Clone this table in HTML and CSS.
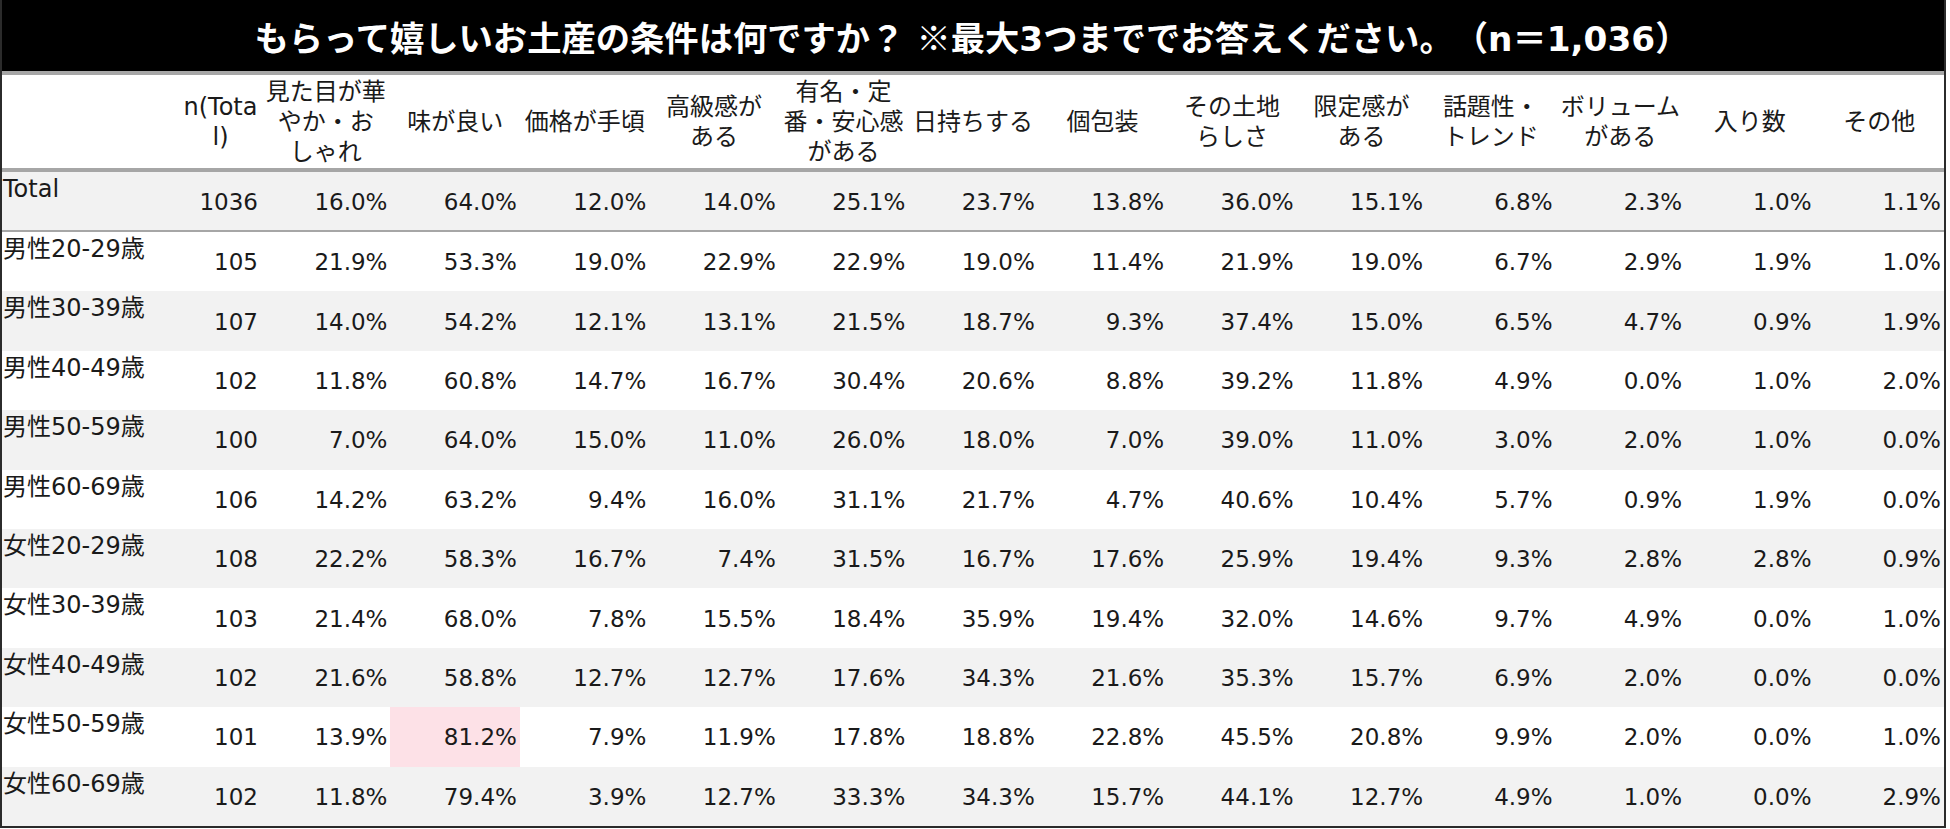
FILE: index.html
```html
<!DOCTYPE html>
<html lang="ja">
<head>
<meta charset="utf-8">
<title>もらって嬉しいお土産の条件</title>
<link rel="stylesheet" href="styles.css">
</head>
<body>
<div class="sheet">
  <div class="title">もらって嬉しいお土産の条件は何ですか？ <span class="cjk">※</span>最大3つまででお答えください。（n＝1,036）</div>
  <div class="row head">
    <div class="hc"></div>
    <div class="hc">n(Tota<br>l)</div>
    <div class="hc">見た目が華<br>やか・お<br>しゃれ</div>
    <div class="hc">味が良い</div>
    <div class="hc">価格が手頃</div>
    <div class="hc">高級感が<br>ある</div>
    <div class="hc">有名・定<br>番・安心感<br>がある</div>
    <div class="hc">日持ちする</div>
    <div class="hc">個包装</div>
    <div class="hc">その土地<br>らしさ</div>
    <div class="hc">限定感が<br>ある</div>
    <div class="hc">話題性・<br>トレンド</div>
    <div class="hc">ボリューム<br>がある</div>
    <div class="hc">入り数</div>
    <div class="hc">その他</div>
  </div>
  <div class="row total alt">
    <div class="lb">Total</div><div class="nm">1036</div><div class="nm">16.0%</div><div class="nm">64.0%</div><div class="nm">12.0%</div><div class="nm">14.0%</div><div class="nm">25.1%</div><div class="nm">23.7%</div><div class="nm">13.8%</div><div class="nm">36.0%</div><div class="nm">15.1%</div><div class="nm">6.8%</div><div class="nm">2.3%</div><div class="nm">1.0%</div><div class="nm">1.1%</div>
  </div>
  <div class="row">
    <div class="lb">男性20-29歳</div><div class="nm">105</div><div class="nm">21.9%</div><div class="nm">53.3%</div><div class="nm">19.0%</div><div class="nm">22.9%</div><div class="nm">22.9%</div><div class="nm">19.0%</div><div class="nm">11.4%</div><div class="nm">21.9%</div><div class="nm">19.0%</div><div class="nm">6.7%</div><div class="nm">2.9%</div><div class="nm">1.9%</div><div class="nm">1.0%</div>
  </div>
  <div class="row alt">
    <div class="lb">男性30-39歳</div><div class="nm">107</div><div class="nm">14.0%</div><div class="nm">54.2%</div><div class="nm">12.1%</div><div class="nm">13.1%</div><div class="nm">21.5%</div><div class="nm">18.7%</div><div class="nm">9.3%</div><div class="nm">37.4%</div><div class="nm">15.0%</div><div class="nm">6.5%</div><div class="nm">4.7%</div><div class="nm">0.9%</div><div class="nm">1.9%</div>
  </div>
  <div class="row">
    <div class="lb">男性40-49歳</div><div class="nm">102</div><div class="nm">11.8%</div><div class="nm">60.8%</div><div class="nm">14.7%</div><div class="nm">16.7%</div><div class="nm">30.4%</div><div class="nm">20.6%</div><div class="nm">8.8%</div><div class="nm">39.2%</div><div class="nm">11.8%</div><div class="nm">4.9%</div><div class="nm">0.0%</div><div class="nm">1.0%</div><div class="nm">2.0%</div>
  </div>
  <div class="row alt">
    <div class="lb">男性50-59歳</div><div class="nm">100</div><div class="nm">7.0%</div><div class="nm">64.0%</div><div class="nm">15.0%</div><div class="nm">11.0%</div><div class="nm">26.0%</div><div class="nm">18.0%</div><div class="nm">7.0%</div><div class="nm">39.0%</div><div class="nm">11.0%</div><div class="nm">3.0%</div><div class="nm">2.0%</div><div class="nm">1.0%</div><div class="nm">0.0%</div>
  </div>
  <div class="row">
    <div class="lb">男性60-69歳</div><div class="nm">106</div><div class="nm">14.2%</div><div class="nm">63.2%</div><div class="nm">9.4%</div><div class="nm">16.0%</div><div class="nm">31.1%</div><div class="nm">21.7%</div><div class="nm">4.7%</div><div class="nm">40.6%</div><div class="nm">10.4%</div><div class="nm">5.7%</div><div class="nm">0.9%</div><div class="nm">1.9%</div><div class="nm">0.0%</div>
  </div>
  <div class="row alt">
    <div class="lb">女性20-29歳</div><div class="nm">108</div><div class="nm">22.2%</div><div class="nm">58.3%</div><div class="nm">16.7%</div><div class="nm">7.4%</div><div class="nm">31.5%</div><div class="nm">16.7%</div><div class="nm">17.6%</div><div class="nm">25.9%</div><div class="nm">19.4%</div><div class="nm">9.3%</div><div class="nm">2.8%</div><div class="nm">2.8%</div><div class="nm">0.9%</div>
  </div>
  <div class="row">
    <div class="lb">女性30-39歳</div><div class="nm">103</div><div class="nm">21.4%</div><div class="nm">68.0%</div><div class="nm">7.8%</div><div class="nm">15.5%</div><div class="nm">18.4%</div><div class="nm">35.9%</div><div class="nm">19.4%</div><div class="nm">32.0%</div><div class="nm">14.6%</div><div class="nm">9.7%</div><div class="nm">4.9%</div><div class="nm">0.0%</div><div class="nm">1.0%</div>
  </div>
  <div class="row alt">
    <div class="lb">女性40-49歳</div><div class="nm">102</div><div class="nm">21.6%</div><div class="nm">58.8%</div><div class="nm">12.7%</div><div class="nm">12.7%</div><div class="nm">17.6%</div><div class="nm">34.3%</div><div class="nm">21.6%</div><div class="nm">35.3%</div><div class="nm">15.7%</div><div class="nm">6.9%</div><div class="nm">2.0%</div><div class="nm">0.0%</div><div class="nm">0.0%</div>
  </div>
  <div class="row">
    <div class="lb">女性50-59歳</div><div class="nm">101</div><div class="nm">13.9%</div><div class="nm hi">81.2%</div><div class="nm">7.9%</div><div class="nm">11.9%</div><div class="nm">17.8%</div><div class="nm">18.8%</div><div class="nm">22.8%</div><div class="nm">45.5%</div><div class="nm">20.8%</div><div class="nm">9.9%</div><div class="nm">2.0%</div><div class="nm">0.0%</div><div class="nm">1.0%</div>
  </div>
  <div class="row alt">
    <div class="lb">女性60-69歳</div><div class="nm">102</div><div class="nm">11.8%</div><div class="nm">79.4%</div><div class="nm">3.9%</div><div class="nm">12.7%</div><div class="nm">33.3%</div><div class="nm">34.3%</div><div class="nm">15.7%</div><div class="nm">44.1%</div><div class="nm">12.7%</div><div class="nm">4.9%</div><div class="nm">1.0%</div><div class="nm">0.0%</div><div class="nm">2.9%</div>
  </div>
</div>
</body>
</html>
```

FILE: styles.css
```css
html, body {
  margin: 0;
  padding: 0;
  background: #ffffff;
}

body {
  font-family: "DejaVu Sans", "Noto Sans CJK JP", sans-serif;
  color: #1a1a1a;
  text-spacing-trim: space-all;
}

.sheet {
  width: 1946px;
  box-sizing: border-box;
  border-left: 2px solid #2b2b2b;
  border-right: 2px solid #2b2b2b;
  border-bottom: 2px solid #2b2b2b;
}

.title {
  height: 71px;
  background: #000000;
  color: #ffffff;
  font-weight: bold;
  font-size: 34.3px;
  display: flex;
  align-items: center;
  justify-content: center;
  padding-right: 2px;
  border-bottom: 4px solid #a6a6a6;
  white-space: pre;
  text-spacing-trim: space-all;
}

.cjk {
  font-family: "Noto Sans CJK JP", sans-serif;
}

.row {
  display: grid;
  grid-template-columns: 178px 81px repeat(13, 1fr);
  height: 59.4px;
  background: #ffffff;
}

.row.alt {
  background: #f2f2f2;
}

.row.head {
  height: 93px;
  border-bottom: 4px solid #a6a6a6;
  background: #ffffff;
}

.row.total {
  height: 58px;
  border-bottom: 2px solid #a6a6a6;
}

.hc {
  display: flex;
  align-items: center;
  justify-content: center;
  text-align: center;
  font-size: 24px;
  line-height: 30px;
  white-space: nowrap;
}

.lb {
  font-size: 24px;
  line-height: 30px;
  padding-top: 2px;
  padding-left: 1px;
  white-space: nowrap;
}

.nm {
  display: flex;
  align-items: center;
  justify-content: flex-end;
  padding-top: 1px;
  padding-right: 3px;
  font-size: 23px;
  white-space: nowrap;
}

.nm.hi {
  background: #fde1e7;
}
```
